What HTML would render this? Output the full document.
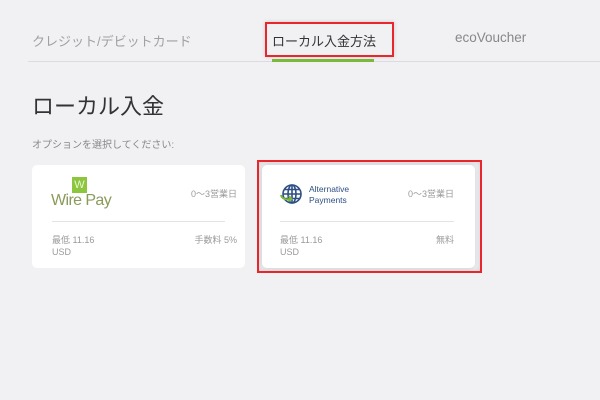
<!DOCTYPE html>
<html><head><meta charset="utf-8"><style>
*{margin:0;padding:0;box-sizing:border-box}
body{width:600px;height:400px;background:#f1f1f4;font-family:"Liberation Sans","Noto Sans CJK JP",sans-serif;position:relative;overflow:hidden}
.a{position:absolute;white-space:nowrap}
.card{position:absolute;background:#fff;border-radius:5px}
.g{color:#9a9a9a;font-size:9px}
</style></head><body>
<div class="a" style="left:32px;top:31px;font-size:13px;color:#a0a0a0">クレジット/デビットカード</div>
<div class="a" style="left:272px;top:31px;font-size:13px;color:#333">ローカル入金方法</div>
<div class="a" style="left:455px;top:30px;font-size:13.5px;color:#888">ecoVoucher</div>
<div class="a" style="left:265px;top:22px;width:129px;height:35px;border:2px solid #e8262b;box-shadow:0 0 4px rgba(0,0,0,.15)"></div>
<div class="a" style="left:28px;top:61px;width:572px;height:1px;background:#dcdce0"></div>
<div class="a" style="left:272px;top:59px;width:102px;height:3px;background:#7cb83a"></div>
<div class="a" style="left:32px;top:89px;font-size:22px;color:#333">ローカル入金</div>
<div class="a" style="left:32px;top:136px;font-size:10px;color:#888">オプションを選択してください:</div>

<div class="card" style="left:32px;top:165px;width:213px;height:103px"></div>
<div class="a" style="left:72px;top:177px;width:15px;height:16px;background:#8cc63f;color:#e8f5d0;font-size:11px;text-align:center;line-height:16px">W</div>
<div class="a" style="left:51px;top:192px;font-size:16px;color:#8a9a5a;letter-spacing:-0.6px">Wire Pay</div>
<div class="a g" style="right:363px;top:187px">0〜3営業日</div>
<div class="a" style="left:52px;top:221px;width:173px;height:1px;background:#e3e3e3"></div>
<div class="a g" style="left:52px;top:233px">最低 11.16</div>
<div class="a g" style="left:52px;top:247px">USD</div>
<div class="a g" style="right:363px;top:233px">手数料 5%</div>

<div class="a" style="left:257px;top:160px;width:225px;height:113px;border:2px solid #e8262b;box-shadow:inset 0 0 6px rgba(0,0,0,.15)"></div>
<div class="card" style="left:262px;top:165px;width:213px;height:103px;box-shadow:0 0 5px rgba(0,0,0,.12)"></div>
<svg class="a" style="left:279px;top:183px" width="24" height="24" viewBox="0 0 24 24" fill="none" stroke="#2d4f85" stroke-width="1.6">
<circle cx="13" cy="11" r="9"/><ellipse cx="13" cy="11" rx="4" ry="9"/><line x1="4" y1="11" x2="22" y2="11"/><line x1="13" y1="2" x2="13" y2="20"/><path d="M5.5 6.5h15M5.5 15.5h15"/>
<path d="M2 12c1 4 5 5 9 4" stroke="#7cb83a" stroke-width="2"/><path d="M10 13l2.5 3-3 2" stroke="#7cb83a" stroke-width="2"/></svg>
<div class="a" style="left:309px;top:184px;font-size:8.5px;color:#2d4f85;line-height:11px">Alternative<br>Payments</div>
<div class="a g" style="right:146px;top:187px">0〜3営業日</div>
<div class="a" style="left:280px;top:221px;width:174px;height:1px;background:#e3e3e3"></div>
<div class="a g" style="left:280px;top:233px">最低 11.16</div>
<div class="a g" style="left:280px;top:247px">USD</div>
<div class="a g" style="right:146px;top:233px">無料</div>
</body></html>
